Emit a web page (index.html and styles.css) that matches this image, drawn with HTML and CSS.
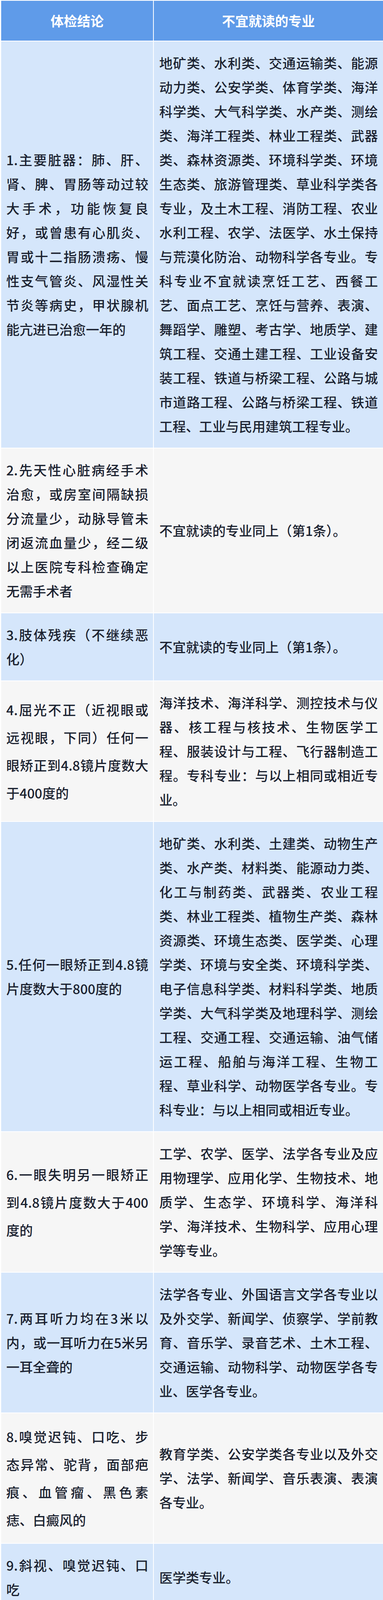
FILE: index.html
```html
<!DOCTYPE html>
<html lang="zh-CN">
<head>
<meta charset="utf-8">
<title>体检结论与不宜就读的专业</title>
<link rel="stylesheet" href="styles.css">
</head>
<body>
<div class="table">
  <div class="row head">
    <div class="cell left">体检结论</div>
    <div class="cell right">不宜就读的专业</div>
  </div>

  <div class="row blue">
    <div class="cell left">
      <span class="ln">1.主要脏器：肺、肝、</span>
      <span class="ln">肾、脾、胃肠等动过较</span>
      <span class="ln">大手术，功能恢复良</span>
      <span class="ln">好，或曾患有心肌炎、</span>
      <span class="ln">胃或十二指肠溃疡、慢</span>
      <span class="ln">性支气管炎、风湿性关</span>
      <span class="ln">节炎等病史，甲状腺机</span>
      <span class="end">能亢进已治愈一年的</span>
    </div>
    <div class="cell right">
      <span class="ln">地矿类、水利类、交通运输类、能源</span>
      <span class="ln">动力类、公安学类、体育学类、海洋</span>
      <span class="ln">科学类、大气科学类、水产类、测绘</span>
      <span class="ln">类、海洋工程类、林业工程类、武器</span>
      <span class="ln">类、森林资源类、环境科学类、环境</span>
      <span class="ln">生态类、旅游管理类、草业科学类各</span>
      <span class="ln">专业，及土木工程、消防工程、农业</span>
      <span class="ln">水利工程、农学、法医学、水土保持</span>
      <span class="ln">与荒漠化防治、动物科学各专业。专</span>
      <span class="ln">科专业不宜就读烹饪工艺、西餐工</span>
      <span class="ln">艺、面点工艺、烹饪与营养、表演、</span>
      <span class="ln">舞蹈学、雕塑、考古学、地质学、建</span>
      <span class="ln">筑工程、交通土建工程、工业设备安</span>
      <span class="ln">装工程、铁道与桥梁工程、公路与城</span>
      <span class="ln">市道路工程、公路与桥梁工程、铁道</span>
      <span class="end">工程、工业与民用建筑工程专业。</span>
    </div>
  </div>

  <div class="row gray">
    <div class="cell left">
      <span class="ln">2.先天性心脏病经手术</span>
      <span class="ln">治愈，或房室间隔缺损</span>
      <span class="ln">分流量少，动脉导管未</span>
      <span class="ln">闭返流血量少，经二级</span>
      <span class="ln">以上医院专科检查确定</span>
      <span class="end">无需手术者</span>
    </div>
    <div class="cell right">
      <span class="end">不宜就读的专业同上（第1条）。</span>
    </div>
  </div>

  <div class="row blue">
    <div class="cell left">
      <span class="ln">3.肢体残疾（不继续恶</span>
      <span class="end">化）</span>
    </div>
    <div class="cell right">
      <span class="end">不宜就读的专业同上（第1条）。</span>
    </div>
  </div>

  <div class="row gray">
    <div class="cell left tall">
      <span class="ln">4.屈光不正（近视眼或</span>
      <span class="ln">远视眼，下同）任何一</span>
      <span class="ln">眼矫正到4.8镜片度数大</span>
      <span class="end">于400度的</span>
    </div>
    <div class="cell right">
      <span class="ln">海洋技术、海洋科学、测控技术与仪</span>
      <span class="ln">器、核工程与核技术、生物医学工</span>
      <span class="ln">程、服装设计与工程、飞行器制造工</span>
      <span class="ln">程。专科专业：与以上相同或相近专</span>
      <span class="end">业。</span>
    </div>
  </div>

  <div class="row blue">
    <div class="cell left">
      <span class="ln">5.任何一眼矫正到4.8镜</span>
      <span class="end">片度数大于800度的</span>
    </div>
    <div class="cell right">
      <span class="ln">地矿类、水利类、土建类、动物生产</span>
      <span class="ln">类、水产类、材料类、能源动力类、</span>
      <span class="ln">化工与制药类、武器类、农业工程</span>
      <span class="ln">类、林业工程类、植物生产类、森林</span>
      <span class="ln">资源类、环境生态类、医学类、心理</span>
      <span class="ln">学类、环境与安全类、环境科学类、</span>
      <span class="ln">电子信息科学类、材料科学类、地质</span>
      <span class="ln">学类、大气科学类及地理科学、测绘</span>
      <span class="ln">工程、交通工程、交通运输、油气储</span>
      <span class="ln">运工程、船舶与海洋工程、生物工</span>
      <span class="ln">程、草业科学、动物医学各专业。专</span>
      <span class="end">科专业：与以上相同或相近专业。</span>
    </div>
  </div>

  <div class="row gray">
    <div class="cell left tall">
      <span class="ln">6.一眼失明另一眼矫正</span>
      <span class="ln">到4.8镜片度数大于400</span>
      <span class="end">度的</span>
    </div>
    <div class="cell right">
      <span class="ln">工学、农学、医学、法学各专业及应</span>
      <span class="ln">用物理学、应用化学、生物技术、地</span>
      <span class="ln">质学、生态学、环境科学、海洋科</span>
      <span class="ln">学、海洋技术、生物科学、应用心理</span>
      <span class="end">学等专业。</span>
    </div>
  </div>

  <div class="row blue">
    <div class="cell left">
      <span class="ln">7.两耳听力均在3米以</span>
      <span class="ln">内，或一耳听力在5米另</span>
      <span class="end">一耳全聋的</span>
    </div>
    <div class="cell right">
      <span class="ln">法学各专业、外国语言文学各专业以</span>
      <span class="ln">及外交学、新闻学、侦察学、学前教</span>
      <span class="ln">育、音乐学、录音艺术、土木工程、</span>
      <span class="ln">交通运输、动物科学、动物医学各专</span>
      <span class="end">业、医学各专业。</span>
    </div>
  </div>

  <div class="row gray">
    <div class="cell left tall">
      <span class="ln">8.嗅觉迟钝、口吃、步</span>
      <span class="ln">态异常、驼背，面部疤</span>
      <span class="ln">痕、血管瘤、黑色素</span>
      <span class="end">痣、白癜风的</span>
    </div>
    <div class="cell right">
      <span class="ln">教育学类、公安学类各专业以及外交</span>
      <span class="ln">学、法学、新闻学、音乐表演、表演</span>
      <span class="end">各专业。</span>
    </div>
  </div>

  <div class="row blue">
    <div class="cell left">
      <span class="ln">9.斜视、嗅觉迟钝、口</span>
      <span class="end">吃</span>
    </div>
    <div class="cell right">
      <span class="end">医学类专业。</span>
    </div>
  </div>
</div>
</body>
</html>
```

FILE: styles.css
```css
html, body {
  margin: 0;
  padding: 0;
  background: #ffffff;
}

body {
  font-family: "Noto Sans CJK SC", "Noto Sans", "DejaVu Sans", sans-serif;
  font-weight: 500;
  color: #1b2230;
}

.table {
  display: flex;
  flex-direction: column;
  gap: 2px;
  padding: 2px 0 0 3px;
  background: #ffffff;
}

.row {
  display: grid;
  grid-template-columns: 389px 587px;
  column-gap: 2px;
}

.cell {
  display: flex;
  flex-direction: column;
  justify-content: center;
  font-size: 34px;
  line-height: 62px;
  padding: 24px 0;
}

.cell.left {
  padding-left: 13px;
  padding-right: 12px;
}

.cell.right {
  padding-left: 14px;
  padding-right: 13px;
}

.cell.tall {
  line-height: 71px;
}

.ln {
  display: block;
  text-align: justify;
  text-align-last: justify;
}

.end {
  display: block;
  text-align: left;
}

.head .cell {
  height: 102px;
  box-sizing: border-box;
  padding: 0;
  align-items: center;
  font-weight: 700;
  color: #ffffff;
  background: #5f9be9;
  line-height: 40px;
}

.blue .cell {
  background: #d5e6fb;
}

.gray .cell {
  background: #f6f6f6;
}
```
